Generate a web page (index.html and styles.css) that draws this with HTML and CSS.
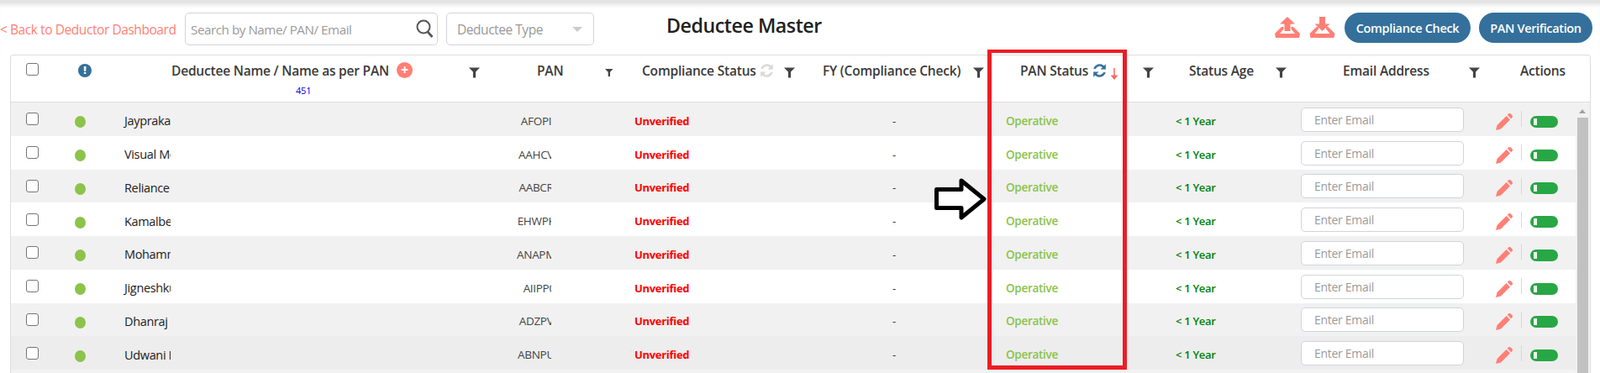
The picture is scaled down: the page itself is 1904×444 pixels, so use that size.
FILE: index.html
```html
<!DOCTYPE html>
<html lang="en">
<head>
    <meta charset="UTF-8">
    <meta name="viewport" content="width=device-width, initial-scale=1.0">
    <title>Deductee Master</title>
    <link rel="stylesheet" href="styles.css">
</head>
<body>
    <svg class="icon-defs" width="0" height="0">
        <defs>
            <symbol id="filter" viewBox="0 0 14 13"><path d="M0 0H14L8.7 5.5V13H5.3V5.5Z"/></symbol>
            <symbol id="refresh" viewBox="0 0 18 18"><path d="M16.6 1.2V7.2H10.6L12.9 4.9A5.4 5.4 0 0 0 4.1 6.6H1.6A7.9 7.9 0 0 1 14.6 3.2ZM1.4 16.8V10.8H7.4L5.1 13.1A5.4 5.4 0 0 0 13.9 11.4H16.4A7.9 7.9 0 0 1 3.4 14.8Z"/></symbol>
            <symbol id="pencil" viewBox="0 0 20 20"><path d="M0 20 1.6 14 12.6 3 17 7.4 6 18.4ZM13.8 1.8 15 .6A2 2 0 0 1 17.8.6L19.4 2.2A2 2 0 0 1 19.4 5L18.2 6.2Z"/></symbol>
        </defs>
    </svg>

    <header class="topbar">
        <a class="back-link" href="#">&lt; Back to Deductor Dashboard</a>
        <div class="search-box">
            <input class="search-input" type="text" placeholder="Search by Name/ PAN/ Email">
            <button class="search-btn" type="button">
                <svg width="21" height="22" viewBox="0 0 21 22"><circle cx="9" cy="9" r="7.5" fill="none" stroke="#555" stroke-width="2"/><path d="M14 15 19.5 21" stroke="#555" stroke-width="2.6" fill="none"/></svg>
            </button>
        </div>
        <div class="type-select">Deductee Type<span class="caret"></span></div>
        <h1 class="page-title">Deductee Master</h1>
        <div class="top-actions">
            <svg class="tray-icon" width="30" height="25" viewBox="0 0 30 25"><path d="M15 0 24 8.5H18.5V17H11.5V8.5H6ZM8 12H10.5V14.5L6 20H24L19.5 14.5V12H22L30 20 29 25H1L0 20Z"/></svg>
            <svg class="tray-icon" width="31" height="25" viewBox="0 0 30 25"><path d="M11.5 0H18.5V8.5H24L15 17 6 8.5H11.5ZM8 12H10.5V14.5L6 20H24L19.5 14.5V12H22L30 20 29 25H1L0 20Z"/></svg>
            <button class="pill-btn compliance-btn" type="button">Compliance Check</button>
            <button class="pill-btn pan-btn" type="button">PAN Verification</button>
        </div>
    </header>

    <section class="grid-wrap">
        <div class="grid-head">
            <div class="col-check"><span class="checkbox"></span></div>
            <div class="col-dot"><span class="info-icon">!</span></div>
            <div class="col-name">
                <div class="head-line">
                    <span class="head-label name-label">Deductee Name / Name as per PAN</span>
                    <span class="plus-icon">+</span>
                    <svg class="filter-icon name-filter"><use href="#filter"/></svg>
                </div>
                <div class="count">451</div>
            </div>
            <div class="col-pan head-line"><span class="head-label">PAN</span><svg class="filter-icon"><use href="#filter"/></svg></div>
            <div class="col-comp head-line">
                <span class="head-label">Compliance Status</span>
                <svg class="sync-icon muted"><use href="#refresh"/></svg>
                <svg class="filter-icon"><use href="#filter"/></svg>
            </div>
            <div class="col-fy head-line"><span class="head-label">FY (Compliance Check)</span><svg class="filter-icon"><use href="#filter"/></svg></div>
            <div class="col-status head-line">
                <span class="head-label">PAN Status</span>
                <svg class="sync-icon"><use href="#refresh"/></svg>
                <svg class="sort-arrow" width="10" height="14" viewBox="0 0 10 14"><path d="M5 0V9" fill="none" stroke="#f0524f" stroke-width="1.3"/><path d="M.5 8.5H9.5L5 14Z" fill="#f76a64"/></svg>
                <svg class="filter-icon"><use href="#filter"/></svg>
            </div>
            <div class="col-age head-line"><span class="head-label">Status Age</span><svg class="filter-icon"><use href="#filter"/></svg></div>
            <div class="col-email head-line"><span class="head-label">Email Address</span><svg class="filter-icon"><use href="#filter"/></svg></div>
            <div class="col-actions head-line"><span class="head-label">Actions</span></div>
        </div>

        <div class="grid-body">
            <div class="rows" id="rows"></div>
            <div class="scrollbar"><span class="scroll-up"></span><span class="scroll-thumb"></span></div>
        </div>
    </section>

    <!-- annotation drawn over the screenshot -->
    <div class="mark-box"></div>
    <svg class="mark-arrow" width="64" height="52" viewBox="0 0 64 52"><path d="M3.5 14.5H33V4L60 26 33 48V36.5H3.5Z" fill="#fff" stroke="#000" stroke-width="5" stroke-linejoin="round"/></svg>

    <script src="rows.js"></script>
</body>
</html>
```

FILE: styles.css
```css
* {
    margin: 0;
    padding: 0;
    box-sizing: border-box;
    font-family: "Open Sans", "Noto Sans", sans-serif;
}

body {
    width: 1904px;
    height: 444px;
    overflow: hidden;
    position: relative;
    background: #fff;
    color: #333;
}

.icon-defs {
    position: absolute;
}

.topbar {
    height: 65px;
    display: flex;
    align-items: flex-start;
    background: #fff;
    border-top: 4px solid #e4e4e4;
    box-shadow: inset 0 5px 5px -3px rgba(0, 0, 0, 0.1);
    padding-top: 11px;
}

.back-link {
    width: 220px;
    padding-top: 9px;
    font-size: 15.5px;
    letter-spacing: -0.43px;
    color: #ff7f75;
    text-decoration: none;
    white-space: nowrap;
}

.search-box {
    width: 301px;
    height: 39px;
    display: flex;
    border: 1px solid #d0d4de;
    border-radius: 5px;
}

.search-input {
    width: 270px;
    border: none;
    outline: none;
    background: none;
    padding-left: 6px;
    font-size: 15.2px;
    letter-spacing: -0.45px;
}

.search-input::placeholder,
.email-input::placeholder {
    color: #9a9a9a;
    opacity: 1;
}

.search-btn {
    width: 30px;
    border: none;
    background: none;
    padding-top: 2px;
}

.type-select {
    width: 176px;
    height: 39px;
    margin-left: 10px;
    display: flex;
    align-items: center;
    padding-left: 12px;
    border: 1px solid #d0d4de;
    border-radius: 5px;
    font-size: 15.5px;
    letter-spacing: -0.45px;
    color: #999;
    position: relative;
}

.caret {
    position: absolute;
    right: 13px;
    top: 16px;
    border-left: 6px solid transparent;
    border-right: 6px solid transparent;
    border-top: 6px solid #ccc;
}

.page-title {
    width: 218px;
    margin: -1px 0 0 86px;
    font-size: 23.2px;
    font-weight: 600;
    letter-spacing: -0.45px;
    line-height: 32px;
    color: #212121;
    white-space: nowrap;
}

.top-actions {
    margin-left: 506px;
    display: flex;
    align-items: flex-start;
}

.tray-icon {
    fill: #ff7f75;
    margin-top: 5px;
    margin-right: 11px;
}

.pill-btn {
    height: 36px;
    border: none;
    border-radius: 18px;
    background: #34709b;
    color: #fff;
    font-size: 14.5px;
    font-weight: 600;
    letter-spacing: -0.35px;
    white-space: nowrap;
}

.compliance-btn {
    width: 150px;
    margin-right: 10px;
}

.pan-btn {
    width: 135px;
}

.grid-wrap {
    width: 1881px;
    height: 379px;
    margin-left: 12px;
    border: 1px solid #ddd;
    border-bottom: none;
    border-radius: 4px 4px 0 0;
    overflow: hidden;
}

.grid-head {
    height: 56px;
    display: grid;
    grid-template-columns: 58px 60px 469px 130px 220px 225px 210px 163px 232px 112px;
    border-bottom: 1px solid #ddd;
    font-size: 15.5px;
    letter-spacing: -0.2px;
}

.head-line {
    display: flex;
    align-items: center;
    height: 35px;
}

.head-label {
    color: #3a3a3a;
    font-weight: 600;
    white-space: nowrap;
}

.col-check {
    padding: 9px 0 0 18px;
}

.col-dot {
    padding: 10px 0 0 22px;
}

.checkbox {
    display: block;
    width: 15px;
    height: 15px;
    border: 1px solid #767676;
    border-radius: 3px;
    background: #fff;
}

.info-icon {
    display: block;
    width: 16px;
    height: 16px;
    border-radius: 50%;
    background: #34709b;
    color: #fff;
    font-size: 12px;
    font-weight: 800;
    line-height: 16px;
    text-align: center;
}

.name-label {
    margin-left: 73px;
}

.plus-icon {
    width: 19px;
    height: 19px;
    margin-left: 9px;
    border-radius: 50%;
    background: #ff7f75;
    color: #fff;
    font-size: 16px;
    font-weight: 700;
    line-height: 18px;
    text-align: center;
}

.filter-icon {
    width: 13px;
    height: 13px;
    fill: #444;
    margin-top: 5px;
}

.name-filter {
    margin-left: 67px;
}

.count {
    margin-left: 221px;
    font-size: 11px;
    line-height: 14px;
    color: #0000ee;
}

.col-pan .head-label {
    margin-left: 39px;
}

.col-pan .filter-icon {
    margin-left: 50px;
}

.col-comp .head-label {
    margin-left: 34px;
}

.col-comp .filter-icon {
    margin-left: 12px;
}

.sync-icon {
    width: 17px;
    height: 18px;
    margin-left: 4px;
    fill: #34709b;
    stroke: #34709b;
    stroke-width: 0.5;
}

.sync-icon.muted {
    fill: #d8d8d8;
    stroke: #d8d8d8;
}

.col-fy .head-label {
    margin-left: 29px;
}

.col-fy .filter-icon {
    margin-left: 15px;
}

.col-status .head-label {
    margin-left: 39px;
}

.col-status .sync-icon {
    margin-left: 5px;
}

.sort-arrow {
    margin: 9px 0 0 4px;
}

.col-status .filter-icon {
    margin-left: 29px;
}

.col-age .head-label {
    margin-left: 30px;
}

.col-age .filter-icon {
    margin-left: 26px;
}

.col-email .head-label {
    margin-left: 50px;
}

.col-email .filter-icon {
    margin-left: 47px;
}

.col-actions .head-label {
    margin-left: 29px;
}

.grid-body {
    display: flex;
    height: 322px;
    background: #f2f2f2;
}

.rows {
    width: 1862px;
}

.row {
    height: 39.75px;
    display: grid;
    grid-template-columns: 58px 60px 469px 130px 220px 225px 210px 163px 232px 95px;
    align-items: center;
    font-size: 13px;
    letter-spacing: -0.3px;
    background: #fff;
}

.row:nth-child(odd) {
    background: #f1f1f1;
}

.row.hovered {
    background: #ededed;
}

.row .col-check {
    padding: 0 0 0 18px;
}

.row .col-dot {
    padding: 7px 0 0 18px;
}

.dot {
    display: block;
    width: 13px;
    height: 14px;
    border-radius: 50%;
    background: #8cc34a;
}

.name-cell,
.pan-cell,
.unverified,
.fy-value,
.operative,
.age {
    padding-top: 4px;
}

.name-cell {
    width: 72px;
    padding-left: 17px;
    overflow: hidden;
    white-space: nowrap;
    font-size: 14.5px;
    letter-spacing: -0.35px;
    color: #222;
    font-weight: 500;
}

.pan-cell {
    color: #444;
    font-weight: 500;
    font-size: 13.5px;
}

.pan-clip {
    display: block;
    width: 118px;
    margin-left: -2px;
    text-align: center;
    white-space: nowrap;
    clip-path: inset(0 60px 0 0);
}

.unverified {
    padding-left: 25px;
    color: #f00;
    font-weight: 700;
}

.fy-value {
    padding-left: 112px;
    color: #333;
}

.operative {
    padding-left: 22px;
    font-size: 13.5px;
    color: #8bc34a;
    font-weight: 600;
}

.age {
    padding-left: 14px;
    color: #008000;
    font-weight: 600;
}

.email-input {
    display: block;
    width: 194px;
    height: 29px;
    margin-top: 1px;
    border: 1px solid #d0d4de;
    border-radius: 5px;
    background: #fff;
    padding-left: 15px;
    font-size: 14px;
    letter-spacing: -0.3px;
    outline: none;
}

.action-cell {
    display: flex;
    align-items: center;
}

.pencil {
    width: 20px;
    height: 20px;
    fill: #ff7f75;
    margin-top: 6px;
}

.divider {
    width: 1px;
    height: 19px;
    margin-left: 10px;
    background: #d8d8d8;
}

.toggle {
    width: 33px;
    height: 14px;
    margin: 6px 0 0 10px;
    border-radius: 7px;
    background: #28a745;
    position: relative;
}

.toggle::before {
    content: '';
    position: absolute;
    left: 4px;
    top: 3px;
    width: 4px;
    height: 8px;
    background: #f4f4f4;
}

.scrollbar {
    width: 17px;
    position: relative;
    background: #f1f1f1;
}

.scroll-up {
    position: absolute;
    left: 4px;
    top: 8px;
    border-left: 4px solid transparent;
    border-right: 4px solid transparent;
    border-bottom: 5px solid #a3a3a3;
}

.scroll-thumb {
    position: absolute;
    left: 2px;
    top: 18px;
    width: 13px;
    height: 304px;
    background: #c1c1c1;
}

/* red box and arrow added on top of the page */
.mark-box {
    position: absolute;
    left: 1175px;
    top: 59px;
    width: 166px;
    height: 381px;
    border: 5px solid #ed1c24;
    border-top-width: 4px;
}

.mark-arrow {
    position: absolute;
    left: 1111px;
    top: 211px;
}
```

FILE: rows.js
```js
// rows of the deductee grid
const deductees = [
    ['Jayprakash', 'AFOPI0000A'],
    ['Visual Media', 'AAHCV0000A'],
    ['Reliance', 'AABCR0000A'],
    ['Kamalbehn', 'EHWPK0000A'],
    ['Mohammad', 'ANAPM0000A'],
    ['Jigneshkumar', 'AIIPP0000A'],
    ['Dhanraj Gupta', 'ADZPV0000A'],
    ['Udwani Hari', 'ABNPU0000A']
];

const rowsEl = document.getElementById('rows');

deductees.forEach((d, i) => {
    const row = document.createElement('div');
    row.className = i === 7 ? 'row hovered' : 'row';
    row.innerHTML = `
        <div class="col-check"><span class="checkbox"></span></div>
        <div class="col-dot"><span class="dot"></span></div>
        <div class="name-cell">${d[0]}</div>
        <div class="pan-cell"><span class="pan-clip">${d[1]}</span></div>
        <div class="unverified">Unverified</div>
        <div class="fy-value">-</div>
        <div class="operative">Operative</div>
        <div class="age">&lt; 1 Year</div>
        <div class="email-cell"><input class="email-input" type="text" placeholder="Enter Email"></div>
        <div class="action-cell">
            <svg class="pencil"><use href="#pencil"/></svg>
            <span class="divider"></span>
            <span class="toggle"></span>
        </div>`;
    rowsEl.appendChild(row);
});
```
